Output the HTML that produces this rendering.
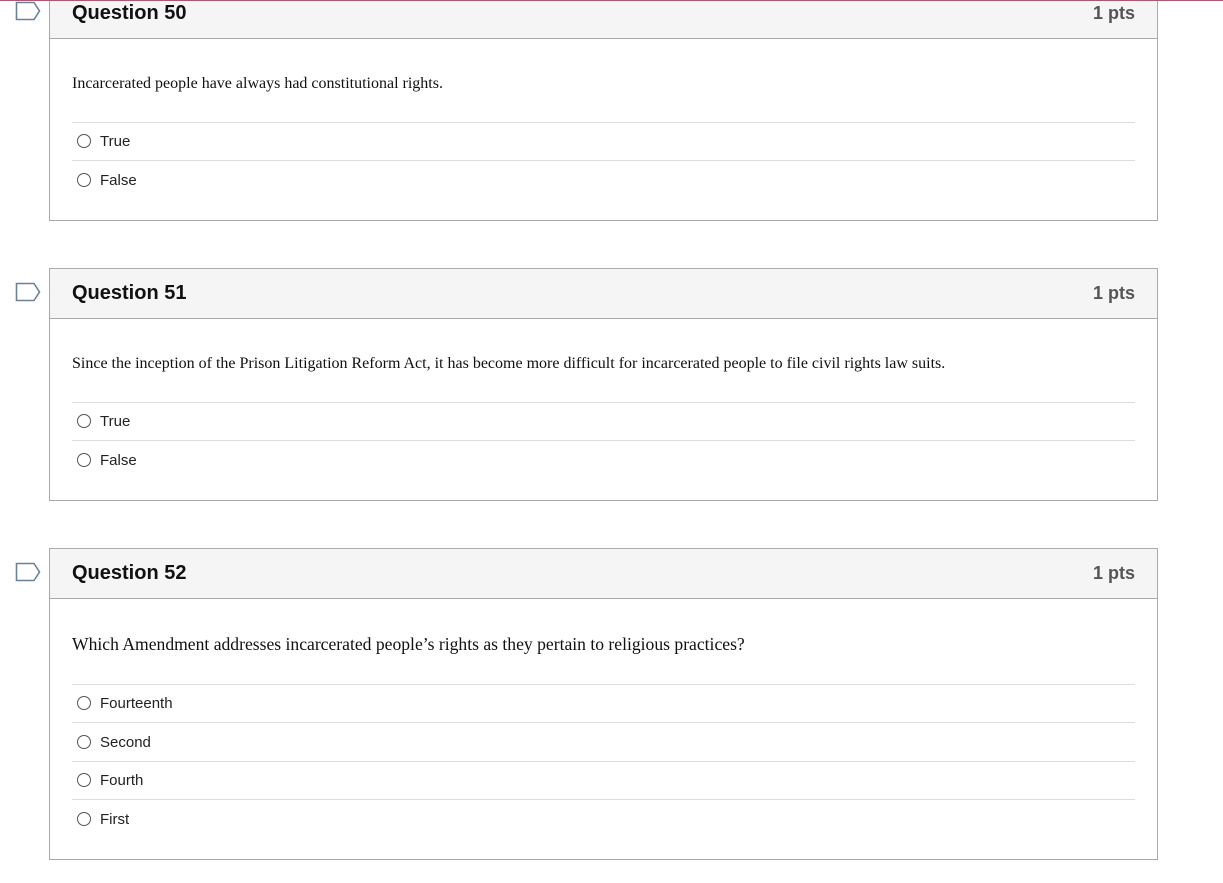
<!DOCTYPE html>
<html><head><style>
body{margin:0;width:1223px;height:883px;overflow:hidden;background:#fff;position:relative;font-family:"Liberation Sans",sans-serif;}
.top{position:absolute;left:0;top:0;width:1223px;height:1px;background:#b0566f;z-index:5;}
.box{position:absolute;left:49px;width:1107px;border:1px solid #aaa;}
.hd{height:49px;background:#f5f5f5;border-bottom:1px solid #aaa;position:relative;}
.hd .t{position:absolute;left:22px;top:13px;font-size:20px;font-weight:bold;color:#111;}
.hd .p{position:absolute;right:22px;top:14px;font-size:18px;font-weight:bold;color:#555;}
.q{position:absolute;left:22px;font-family:"Liberation Serif",serif;font-size:16px;color:#111;}
.line{position:absolute;left:22px;right:22px;height:1px;background:#ddd;}
.opt{position:absolute;left:27px;font-size:15px;color:#222;}
.opt i{display:inline-block;width:12px;height:12px;border:1px solid #555;border-radius:50%;vertical-align:-2px;margin-right:9px;}
.flag{position:absolute;left:15px;}
</style></head><body>
<div class="top"></div>

<svg class="flag" style="top:1px" width="26" height="20" viewBox="0 0 26 20"><path d="M1.5 1.5H19L24.5 10L19 18.5H1.5Z" fill="none" stroke="#6b8199" stroke-width="1.6"/></svg>
<div class="box" style="top:-12px;height:231px">
 <div class="hd"><span class="t">Question 50</span><span class="p">1 pts</span></div>
 <div class="q" style="top:86px">Incarcerated people have always had constitutional rights.</div>
 <div class="line" style="top:133px"></div>
 <div class="opt" style="top:144px"><i></i>True</div>
 <div class="line" style="top:171px"></div>
 <div class="opt" style="top:183px"><i></i>False</div>
</div>

<svg class="flag" style="top:282px" width="26" height="20" viewBox="0 0 26 20"><path d="M1.5 1.5H19L24.5 10L19 18.5H1.5Z" fill="none" stroke="#6b8199" stroke-width="1.6"/></svg>
<div class="box" style="top:268px;height:231px">
 <div class="hd"><span class="t">Question 51</span><span class="p">1 pts</span></div>
 <div class="q" style="top:86px">Since the inception of the Prison Litigation Reform Act, it has become more difficult for incarcerated people to file civil rights law suits.</div>
 <div class="line" style="top:133px"></div>
 <div class="opt" style="top:144px"><i></i>True</div>
 <div class="line" style="top:171px"></div>
 <div class="opt" style="top:183px"><i></i>False</div>
</div>

<svg class="flag" style="top:562px" width="26" height="20" viewBox="0 0 26 20"><path d="M1.5 1.5H19L24.5 10L19 18.5H1.5Z" fill="none" stroke="#6b8199" stroke-width="1.6"/></svg>
<div class="box" style="top:548px;height:310px">
 <div class="hd"><span class="t">Question 52</span><span class="p">1 pts</span></div>
 <div class="q" style="top:85px;font-size:17.6px">Which Amendment addresses incarcerated people’s rights as they pertain to religious practices?</div>
 <div class="line" style="top:135px"></div>
 <div class="opt" style="top:146px"><i></i>Fourteenth</div>
 <div class="line" style="top:173px"></div>
 <div class="opt" style="top:185px"><i></i>Second</div>
 <div class="line" style="top:212px"></div>
 <div class="opt" style="top:223px"><i></i>Fourth</div>
 <div class="line" style="top:250px"></div>
 <div class="opt" style="top:262px"><i></i>First</div>
</div>
</body></html>
